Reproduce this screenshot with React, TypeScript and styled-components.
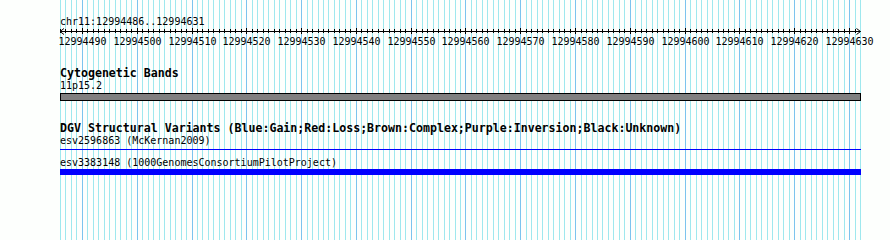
import React from 'react';
import styled, { createGlobalStyle } from 'styled-components';

const GlobalStyle = createGlobalStyle`
  html, body {
    margin: 0;
    padding: 0;
    background: #fdfffd;
  }
`;

const START = 12994486;
const BASES = 146;
const LEFT = 60;
const WIDTH = 800;
const FONT = "'DejaVu Sans Mono', 'Liberation Mono', monospace";
const px = (i: number) => LEFT + (i * WIDTH) / BASES;

const Panel = styled.div`
  position: relative;
  width: 890px;
  height: 240px;
  overflow: hidden;
  background: #fdfffd;
  font-family: ${FONT};
  color: #000;
`;

const GridLayer = styled.svg`
  position: absolute;
  left: 0;
  top: 0;
  z-index: 0;
`;

const Tracks = styled.div`
  position: relative;
  z-index: 1;
  display: flex;
  flex-direction: column;
  padding: 17px 0 0 ${LEFT}px;
`;

const Label = styled.div<{ $gap?: number }>`
  height: 11px;
  line-height: 9px;
  font-size: 10px;
  white-space: pre;
  margin-top: ${(p) => p.$gap ?? 0}px;
`;

const Title = styled.div<{ $gap?: number }>`
  height: 11px;
  line-height: 9px;
  font-size: 11.6px;
  font-weight: bold;
  white-space: pre;
  margin-top: ${(p) => p.$gap ?? 0}px;
`;

const Ruler = styled.svg`
  display: block;
  margin-left: -${LEFT}px;
`;

const Band = styled.div`
  margin-top: 1px;
  width: 799px;
  height: 6px;
  background: #808080;
  border: 1px solid #000;
`;

const Feature = styled.div<{ $h: number; $gap: number }>`
  margin-top: ${(p) => p.$gap}px;
  width: 801px;
  height: ${(p) => p.$h}px;
  background: #0000ff;
`;

function Grid() {
  const lines = [];
  for (let i = 0; i <= BASES; i++) {
    const major = (START + i) % 10 === 0;
    lines.push(
      <rect
        key={i}
        x={Math.round(px(i))}
        y={0}
        width={1}
        height={240}
        fill={major ? '#7cc4ee' : '#9ee8ee'}
      />
    );
  }
  return (
    <GridLayer width={890} height={240}>
      {lines}
    </GridLayer>
  );
}

function Scale() {
  const ticks = [];
  const labels = [];
  for (let i = 0; i <= BASES - 1; i++) {
    const x = Math.round(px(i)) + 0.5;
    const major = (START + i) % 10 === 0;
    ticks.push(
      <line key={i} x1={x} x2={x} y1={major ? 0 : 1} y2={major ? 6 : 5} stroke="#000" />
    );
    if (major) {
      labels.push(
        <text key={i} x={x} y={17} textAnchor="middle" fontSize={10} fontFamily={FONT}>
          {START + i}
        </text>
      );
    }
  }
  const end = Math.round(px(BASES)) + 0.5;
  return (
    <Ruler width={890} height={20}>
      <line x1={LEFT} x2={end} y1={3.5} y2={3.5} stroke="#000" />
      <polyline points={`${LEFT + 4},0.5 ${LEFT},3.5 ${LEFT + 4},6.5`} fill="none" stroke="#000" />
      <polyline points={`${end - 4},0.5 ${end},3.5 ${end - 4},6.5`} fill="none" stroke="#000" />
      {ticks}
      {labels}
    </Ruler>
  );
}

export default function App() {
  return (
    <Panel>
      <GlobalStyle />
      <Grid />
      <Tracks>
        <Label>chr11:12994486..12994631</Label>
        <Scale />
        <Title $gap={21}>Cytogenetic Bands</Title>
        <Label $gap={1}>11p15.2</Label>
        <Band />
        <Title $gap={23}>
          DGV Structural Variants (Blue:Gain;Red:Loss;Brown:Complex;Purple:Inversion;Black:Unknown)
        </Title>
        <Label $gap={1}>esv2596863 (McKernan2009)</Label>
        <Feature $h={1} $gap={2} />
        <Label $gap={8}>esv3383148 (1000GenomesConsortiumPilotProject)</Label>
        <Feature $h={6} $gap={0} />
      </Tracks>
    </Panel>
  );
}
